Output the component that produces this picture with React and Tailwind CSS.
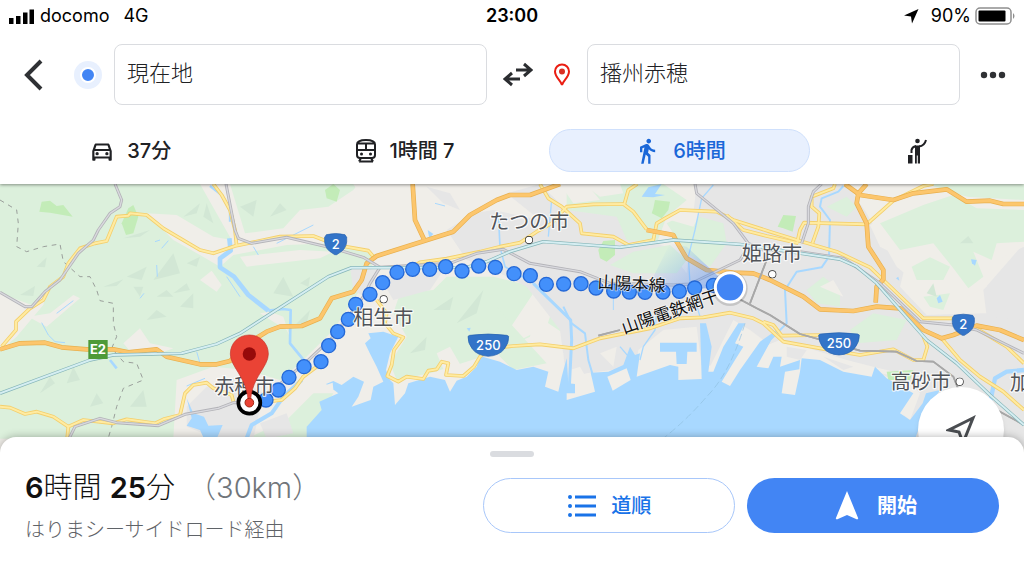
import { useState } from "react";
import { MdDirectionsWalk, MdNavigation, MdOutlineDirectionsCar } from "react-icons/md";

function TrainIcon() {
  return (
    <svg width="22" height="26" viewBox="0 0 22 26" fill="none" stroke="currentColor" strokeWidth="2" aria-hidden="true">
      <path d="M2 6.500C2 3 6 2 11 2s9 1 9 4.500V17a3 3 0 0 1-3 3H5a3 3 0 0 1-3-3ZM2 12h18M11 5v7M3 5.500h16" />
      <path d="M6.500 16h.01M15.500 16h.01" strokeWidth="3" strokeLinecap="round" />
      <path d="M4 23.500h14M6 20l-2 3.500M16 20l2 3.500" />
    </svg>
  );
}

function HailIcon() {
  return (
    <svg width="22" height="28" viewBox="0 0 22 28" fill="currentColor" aria-hidden="true">
      <circle cx="11.500" cy="4" r="2.300" />
      <path d="M9 8.500h5v18h-2.200v-8h-1v8H9z" />
      <path d="M10 9Q6 10 5.500 13v3M13 9.500Q18.500 9 20 3" fill="none" stroke="currentColor" strokeWidth="2" />
      <path d="M2 18h4.500v8.500H2z" />
    </svg>
  );
}

const MODES = [
  { id: "car", label: "37分", name: "車", icon: <MdOutlineDirectionsCar size={26} /> },
  { id: "transit", label: "1時間 7", name: "電車", icon: <TrainIcon /> },
  { id: "walk", label: "6時間", name: "徒歩", icon: <MdDirectionsWalk size={28} /> },
  { id: "hail", label: "", name: "タクシー", icon: <HailIcon /> },
];

// Map geometry is in map units, three per CSS pixel on a 1024px wide screen
const FOREST = [
  "0,12 1060,12 1100,80 1225,180 1120,240 1075,430 1000,470 900,560 860,640 1000,640 965,700 920,776 0,776",
  "1200,340 1300,330 1340,290 1480,290 1560,310 1640,340 1710,420 1690,460 1600,400 1590,470 1480,520 1290,580 1190,600 1170,550 1220,470 1180,400",
  "1700,25 1760,20 1800,50 1870,40 1860,12 1990,12 2060,60 2000,110 1970,190 1880,180 1850,110 1700,90",
  "2000,130 2060,100 2170,130 2180,190 2130,260 2060,220",
  "1830,255 1900,215 2010,195 2060,240 2030,280 1900,280",
  "2420,330 2470,290 2520,330 2520,380 2450,370",
  "2550,450 2620,400 2720,420 2690,480 2570,490",
  "1440,400 1490,380 1540,440 1640,550 1540,570 1500,530",
  "2480,80 2540,50 2570,80 2540,110",
  "2780,12 3072,12 3072,60 2900,50",
];

const HILLSIDE = [
  "2640,130 2770,75 2860,45 2930,85 3072,90 3072,185 2990,190 2975,240 2920,215 2950,290 2905,325 2860,265 2800,190 2700,210",
  "2735,260 2790,232 2850,260 2830,300 2750,300",
  "2770,350 2850,340 2830,390 2790,380",
];

const BARREN = [
  "440,100 530,105 640,170 695,180 600,12 690,12 735,160 850,145 900,90 985,80 1060,30 1075,12 1240,12 1270,170 1130,225 1000,190 860,195 700,225 660,260 600,225 520,180",
  "0,340 95,375 140,340 130,375 50,470 15,500 0,500",
  "85,410 150,400 220,345 240,355 140,440",
  "370,490 420,445 450,490 520,505 480,520 400,525",
  "600,300 635,272 665,315 650,335",
  "780,400 810,395 850,410 870,470 860,450 820,425",
  "1060,120 1120,135 1110,180 1070,170",
  "720,230 900,210 1000,215 960,235 740,260",
  "530,600 640,560 740,570 840,600 900,550 1000,450 1080,330 1130,300 1240,310 1110,430 1150,460 1120,550 1060,590 940,640 860,720 740,776 520,776",
  "1240,12 1536,12 1536,200 1300,240 1270,170",
  "1310,520 1350,500 1390,570 1340,590",
  "1600,340 1660,380 1640,440 1560,480 1540,540 1500,490",
];

const URBAN = [
  "560,680 620,620 710,590 790,640 760,776 650,776 560,740",
  "780,730 860,700 880,760 800,776",
  "1280,20 1350,40 1380,90 1330,70",
  "1340,150 1420,100 1480,90 1620,120 1700,90 1860,90 1900,170 2000,200 2060,280 2090,12 2540,12 2600,100 2690,260 2860,400 3072,400 3072,800 2720,800 2700,590 2440,510 2280,500 2200,560 1990,550 1760,580 1700,600 1680,450 1580,320 1480,270 1400,240",
  "1520,40 1620,12 1700,90 1620,120",
  "1050,260 1130,270 1110,360 1060,330",
  "1140,290 1330,270 1290,330 1180,360",
  "2950,330 3072,190 3072,420 2960,410",
];

const HILLS = [
  "370,175 450,150 420,170", "380,290 440,260 425,300", "310,320 370,298 350,318", "460,300 520,220 540,280",
  "110,260 140,232 135,262", "60,345 105,318 100,348", "200,610 220,560 240,600", "120,640 150,590 165,610",
  "520,340 560,310 570,330", "540,380 580,340 580,385", "440,420 470,390 500,410", "550,110 600,70 590,100",
  "620,70 640,130 610,110", "390,680 430,630 440,680", "270,680 290,640 310,670", "810,110 840,70 860,90",
  "820,340 850,290 880,350", "880,440 930,390 920,430", "1300,390 1360,350 1350,390", "1370,430 1450,330 1430,400",
  "1230,520 1280,470 1275,510", "720,80 770,60 760,110", "470,350 500,330 520,350", "400,320 430,320 420,350",
  "2880,190 2905,168 2920,190", "2780,340 2800,310 2810,350", "560,250 600,230 590,260", "900,310 930,290 925,320",
];

const PARKS = [
  "118,95 125,65 150,62 170,78 190,75 218,110 150,98",
  "365,130 385,85 400,75 415,110 400,160 378,165",
  "975,30 1000,12 1020,30 1010,65 980,55",
  "1795,210 1810,183 1845,180 1845,225 1820,245 1800,235",
  "1960,85 1965,60 2010,65 2005,90 1985,115 1955,100",
  "2333,140 2350,105 2388,108 2378,155 2350,145",
  "2660,575 2740,570 2730,600 2665,600",
];

const RIVERS = [
  { w: 7, d: "M630 18 665 45 690 90 690 125" },
  { w: 14, d: "M688 175 692 212 660 235 660 262 702 290 745 345 805 392" },
  { w: 8, d: "M805 392 850 387 872 390 870 490 915 545" },
  { w: 12, d: "M738 780 755 735 815 700 850 650 905 600" },
  { w: 5, d: "M1495 100 1500 200 1515 260 1600 310" },
  { w: 9, d: "M1600 310 1640 350 1712 420 1715 480 1708 620" },
  { w: 6, d: "M1690 380 1715 430 1755 460 1765 540 1780 590" },
  { w: 4, d: "M1625 20 1655 60 1645 170" },
  { w: 4, d: "M2140 15 2105 55 2085 150 2065 230 2070 310 2100 410" },
  { w: 4, d: "M1970 400 1965 450 1930 500 1920 540M1860 500 1890 535" },
  { w: 6, d: "M2530 18 2515 35 2465 55 2460 80 2490 120 2487 230 2465 262 2390 275 2355 330 2360 430 2310 480 2280 530" },
  { w: 13, d: "M3072 570 3020 575 2985 595 2972 660" },
  { w: 3, d: "M125 428 145 465 165 485 195 488M170 400 220 362M465 185 480 180M485 205 505 182M470 255 472 290M420 355 432 340M680 290 720 350" },
  { w: 3, d: "M830 190 940 135M1305 70 1335 78M760 200 775 225M590 515 600 550M560 618 615 595M1840 340 1840 390" },
  { w: 8, d: "M330 540 350 565" },
];

const LAKES = [
  "560,655 580,700 612,710 625,737 668,735 650,776 612,776 600,750 560,737 575,715",
  "1925,50 1945,22 1985,12 1965,42 1995,45 1960,52",
  "1283,150 1300,162 1288,175",
  "2810,355 2820,345 2828,365 2815,370",
  "2913,238 2930,240 2925,257 2916,250",
  "2688,295 2695,290 2698,302",
  "1400,445 1412,443 1408,455",
];

const SEA =
  "M920 790 920 740 965 690 958 665 1015 640 978 612 1000 603 1025 615 1060 590 1092 605 1075 650 1055 680 1112 660 1120 620 1150 605 1130 560 1112 525 1095 490 1112 475 1105 460 1150 455 1195 470 1170 520 1158 570 1170 600 1180 610 1185 675 1215 640 1225 610 1290 590 1335 600 1350 635 1370 602 1400 590 1430 560 1440 528 1500 545 1550 570 1600 560 1645 575 1635 620 1675 635 1685 590 1700 535 1705 610 1725 612 1725 640 1700 640 1700 660 1785 635 1772 578 1825 575 1870 555 1890 500 1905 525 1920 520 1910 590 2010 555 2035 560 2035 600 2105 597 2100 430 2118 430 2135 500 2125 575 2140 575 2170 500 2215 430 2235 430 2205 490 2230 500 2205 540 2165 605 2190 618 2220 570 2280 485 2330 450 2270 560 2305 565 2320 530 2345 530 2340 560 2400 540 2398 568 2355 575 2345 640 2385 645 2400 575 2405 535 2460 540 2530 575 2615 590 2625 560 2660 595 2740 640 2700 700 2730 720 2768 670 2778 640 2820 630 2770 710 2740 790Z";

const ISLETS = ["1822,590 1880,565 1892,600 1838,632", "980,614 998,608 1000,628 986,636"];

const ROADS = {
  yellow: [
    "M5 500 48 450 48 425 90 385 130 360 150 320 190 290 205 250 240 205 285 190 320 183 350 110 385 107 390 100 440 105 490 145 600 210 640 220 705 198 840 170 940 168 1010 195 1105 212 1122 232",
    "M640 12 665 45 690 90 705 150 710 198",
    "M0 680 30 683 75 702 110 695 160 710 205 740 250 720 340 730 380 718 465 730 490 718 540 705 555 640 580 615 620 608 640 625 695 645 700 665",
    "M205 740 200 790",
    "M1130 360 1160 400 1155 430 1180 460 1210 472 1182 510 1175 555 1162 588 1195 605 1220 590 1270 597 1285 572 1310 568 1325 545 1345 550 1338 585 1390 588 1422 560 1440 530 1470 505 1540 498 1620 493 1720 505 1800 475 1950 445 2040 415 2110 412 2190 398 2260 415 2290 430 2350 485 2460 505 2580 525 2680 508 2740 540 2770 540 2782 500 2770 470",
    "M2290 425 2320 435 2345 467 2460 465",
    "M800 665 845 660 885 625 910 590 950 560",
    "M1230 265 1260 247 1340 236 1440 215 1500 200 1560 188 1610 155 1655 130 1700 80 1780 73 1870 72 1900 95 1940 148",
    "M1620 12 1645 55 1685 80 1740 130 1745 160 1840 170 1885 195 1960 180 1970 130 1995 115 2040 90 2150 95 2200 120 2310 155 2400 183 2510 215 2610 262 2650 300 2770 415 2860 415",
    "M2180 105 2230 150 2300 168 2395 190",
    "M1912 12 1885 30 1873 72",
    "M2505 12 2500 25 2435 50 2435 80 2458 100 2455 140 2437 190",
    "M2392 185 2400 150 2412 128 2600 133 2680 62 2770 18 2800 12",
    "M2825 475 2880 540 2940 590 3010 635 3072 690",
    "M2920 440 3020 500 3072 550",
  ],
  orange: [
    "M0 508 60 490 135 488 185 502 260 508 340 508 385 517 470 508 500 530 600 553 650 553 690 543 760 480 800 455 840 440 905 438 960 415 995 355 1060 335 1085 300 1100 250 1130 228 1360 155 1410 105 1490 60 1530 45 1590 45 1680 12",
    "M1238 12 1245 120 1272 178",
    "M1940 150 2020 165 2030 185 2060 235 2120 270 2200 278 2260 280 2310 300 2410 350 2460 388 2560 393 2630 380 2700 385 2770 450 2825 475 2860 465 2930 437 3000 450 3072 480",
    "M2535 12 2580 45 2680 60 2740 40 2840 28 2900 65 2970 62 3010 72 3072 72",
    "M2600 12 2575 40 2570 70 2600 130 2605 200 2650 270 2650 298 2630 320 2627 368",
  ],
  rail: [
    "M345 12 365 60 360 80 330 100 295 150 280 180 235 220 180 300 135 335 95 380 75 380 0 337",
    "M678 12 705 150 715 175 755 190 860 172 1000 205 1090 232 1140 262 1110 310 1090 350 1000 470 920 545 830 620 750 668 700 668 655 685 555 703 475 737 350 728 300 715 225 740 200 790",
    "M1140 262 1350 250 1430 220 1510 208 1590 250 1740 275 1830 310 2020 315 2070 312 2220 240 2245 200",
    "M2085 12 2090 40 2200 130 2245 190 2290 210 2400 215 2530 235 2640 310 2760 425 2860 435 2930 450 3072 520",
    "M2465 12 2440 35 2425 80 2425 130 2405 190",
  ],
  privateRail: [
    "M2300 240 2250 370",
    "M1795 467 1860 450",
    "M2195 345 2270 385 2310 405 2400 462 2580 512 2690 515 2750 543 2800 545 2860 590 2880 640 2930 690 3000 695 3072 735",
  ],
  shinkansen: [
    "M0 640 270 540 340 525 545 520 650 492 720 460 985 290 1055 263 1200 263 1400 262 1460 245 1530 215 1630 185 1860 202 2020 180 2220 193 2350 212 2520 238 2570 260 2630 310 2780 480 2870 550 2970 645 3072 735",
  ],
};

const PREFECTURE_BORDER =
  "M0 60 50 90 55 130 50 200 80 215 130 200 180 192 190 245 240 290 270 290 290 330 300 362 340 370 340 430 350 470 335 505 370 545 410 550 430 600 370 625 350 680 335 740 320 790";

const ROUTE = [
  [798, 660], [835, 630], [867, 592], [912, 560], [963, 545], [986, 497], [1013, 455], [1045, 418],
  [1067, 373], [1110, 343], [1148, 308], [1191, 277], [1238, 268], [1289, 268], [1337, 260], [1386, 273],
  [1436, 258], [1486, 262], [1542, 281], [1591, 287], [1639, 313], [1691, 312], [1743, 311], [1788, 324],
  [1841, 333], [1888, 336], [1935, 337], [1989, 336], [2038, 334], [2084, 324], [2140, 316],
];

const CITIES = [
  { name: "たつの市", x: 1588, y: 147, dot: [1587, 180] },
  { name: "姫路市", x: 2316, y: 244, dot: [2317, 283] },
  { name: "相生市", x: 1150, y: 436, dot: [1151, 358] },
  { name: "赤穂市", x: 733, y: 643 },
  { name: "高砂市", x: 2762, y: 627, dot: [2879, 605] },
  { name: "加", x: 3060, y: 630 },
];

const SHIELDS = [
  { n: "2", x: 1007, y: 192 },
  { n: "2", x: 2890, y: 434 },
  { n: "250", x: 1465, y: 495 },
  { n: "250", x: 2517, y: 491 },
];

function Polygons({ shapes, fill }) {
  return (
    <g fill={fill}>
      {shapes.map((points) => (
        <polygon key={points} points={points} />
      ))}
    </g>
  );
}

// A wide edge stroke with a narrower core on top
function Lines({ paths, edge, core, outer, inner }) {
  return (
    <g fill="none" strokeLinejoin="round">
      {paths.map((d) => <path key={d} d={d} stroke={edge} strokeWidth={outer} />)}
      {paths.map((d) => <path key={d} d={d} stroke={core} strokeWidth={inner} />)}
    </g>
  );
}

function Shield({ n, x, y }) {
  const wide = n.length > 1;
  return (
    <g transform={`translate(${x} ${y})`}>
      <path
        d={
          wide
            ? "M-56-29Q0-37 56-29L61-26Q62 -6 48 12Q32 32 0 34Q-32 32-48 12Q-62-6-61-26Z"
            : "M-28-28Q0-35 28-28L33-20Q36 8 18 22L3 32H-3L-18 22Q-36 8-33-20Z"
        }
        fill="#3374c8"
        stroke="#2560ad"
        strokeWidth="2"
      />
      <text y="14" textAnchor="middle" fill="#fff" fontSize="39" fontWeight="500">
        {n}
      </text>
    </g>
  );
}

function RouteMap() {
  return (
    <svg
      viewBox="0 12 3072 888"
      preserveAspectRatio="xMidYMin slice"
      className="absolute inset-0 h-full w-full"
      role="img"
      aria-label="経路の地図"
    >
      <defs>
        <linearGradient id="beam" x1="1" y1="1" x2="0" y2="0.3">
          <stop offset="0" stopColor="#4285f4" stopOpacity="0.55" />
          <stop offset="1" stopColor="#4285f4" stopOpacity="0" />
        </linearGradient>
      </defs>

      <rect y="12" width="3072" height="888" fill="#f0eee9" />
      <Polygons shapes={FOREST.slice(0, 2)} fill="#dcf0dc" />
      <Polygons shapes={BARREN} fill="#f0eee9" />
      <Polygons shapes={URBAN} fill="#e6e6e6" />
      <Polygons shapes={FOREST.slice(2)} fill="#dcf0dc" />

      {/* Foothills, port and reclaimed land */}
      <g fill="#f0eee9">
        <path d="M2610 135 2780 60 2840 38 3072 85V200L2970 250 2960 320 2900 350 2940 400 2780 405 2700 320 2720 240 2640 200Z" />
        <path d="M1640 575 1670 500 1690 520 1690 640 1630 620ZM1710 570 1740 560 1785 640 1700 660ZM1905 590 1915 510 1990 450 2090 440 2110 600 2030 600 2000 550ZM2120 580 2200 420 2250 450 2290 480 2200 620ZM2280 560 2290 500 2340 480 2420 500 2440 510 2540 540 2620 560 2700 580 2760 640 2730 720 2690 690 2400 660Z" />
        <path d="M2460 320 2530 350 2500 300ZM1680 12 1760 12 1800 60 1720 70ZM2040 90 2100 100 2080 140 2010 120ZM1800 520 1850 500 1840 560Z" />
      </g>
      <path d="M2360 500 2420 510 2400 540 2360 530ZM2470 530 2560 560 2530 570ZM2640 580 2700 590 2680 600Z" fill="#e6e6e6" />
      <Polygons shapes={HILLSIDE} fill="#dcf0dc" />
      <Polygons shapes={HILLS} fill="#d2e7d5" />
      <Polygons shapes={PARKS} fill="#c3ecb8" />

      <path d={SEA} fill="#a8d8ff" />
      <Polygons shapes={ISLETS} fill="#f0eee9" />
      <path d="M1980 488H2090V515H2062L2060 552H2030L2028 515H1980ZM1840 635l8 8 6-8 4 4-8 12z" fill="#a8d8ff" />
      <Polygons shapes={LAKES} fill="#a8d8ff" />
      <g fill="none" stroke="#a8d8ff" strokeLinejoin="round">
        {RIVERS.map(({ d, w }) => <path key={d} d={d} strokeWidth={w} />)}
      </g>
      <path d="M2235 430Q2190 580 2120 650Q2060 720 1990 775" fill="none" stroke="#8fbfe0" strokeWidth="2" strokeDasharray="22 10" />

      <path d={PREFECTURE_BORDER} fill="none" stroke="#9a9f9b" strokeWidth="3" strokeDasharray="14 14" />
      <Lines paths={ROADS.yellow} edge="#f3cf6d" core="#ffeba1" outer={11} inner={6} />
      <Lines paths={ROADS.orange} edge="#e9b04e" core="#fcc66d" outer={14} inner={10} />
      <Lines paths={ROADS.rail} edge="#b3b3b8" core="#d9d9de" outer={9} inner={4} />
      <Lines paths={ROADS.privateRail} edge="#a8a8a8" core="#a8a8a8" outer={5} inner={5} />
      <Lines paths={ROADS.shinkansen} edge="#86b5b8" core="#d5eef2" outer={10} inner={6} />

      <polygon points="2190,322 2000,330 1960,290 2010,190 2060,200" fill="url(#beam)" />

      <g fill="#4390fb" stroke="#2468d6" strokeWidth="4">
        {ROUTE.map(([x, y]) => <circle key={x} cx={x} cy={y} r="21" />)}
      </g>

      {SHIELDS.map((s) => <Shield key={s.x} {...s} />)}
      <rect x="265" y="480" width="58" height="57" fill="#4e9a38" />
      <text x="294" y="523" textAnchor="middle" fill="#fff" fontSize="39" fontWeight="700">E2</text>

      <g fontSize="60" textAnchor="middle" fill="#505358" stroke="#fff" strokeOpacity="0.8" strokeWidth="7" strokeLinejoin="round" paintOrder="stroke">
        {CITIES.map((c) => (
          <g key={c.name}>
            <text x={c.x} y={c.y}>{c.name}</text>
            {c.dot && <circle cx={c.dot[0]} cy={c.dot[1]} r="10" fill="#fff" stroke="#222" strokeOpacity="1" strokeWidth="4" />}
          </g>
        ))}
      </g>
      <g fontSize="51" fill="#111" stroke="#fff" strokeOpacity="0.6" strokeWidth="5" paintOrder="stroke">
        <text transform="translate(1792 324) rotate(3)">山陽本線</text>
        <text transform="translate(1872 462) rotate(-19)">山陽電鉄網干線</text>
      </g>

      <circle cx="2190" cy="325" r="53" fill="#000" opacity="0.14" />
      <circle cx="2190" cy="322" r="44" fill="#4285f4" stroke="#fff" strokeWidth="9" />

      <circle cx="748" cy="668" r="33" fill="#fff" stroke="#000" strokeWidth="11" />
      <path
        d="M748 465C715 465 691 490 691 522C691 560 738 590 744 656H752C758 590 805 560 805 522C805 490 781 465 748 465Z"
        fill="#ea4335"
        stroke="#c5372c"
        strokeWidth="2"
      />
      <circle cx="748" cy="522" r="20" fill="#960a0a" />
      <circle cx="748" cy="668" r="13" fill="#ea4335" stroke="#a52714" strokeWidth="3" />
    </svg>
  );
}

function StatusBar() {
  return (
    <div className="flex h-8 items-center px-2 text-lg text-black">
      <div className="flex flex-1 items-center gap-1.5">
        <svg width="26" height="16" viewBox="0 0 26 16" aria-hidden="true">
          <path d="M1 10h4.500v6H1zM8 8h4.500v8H8zM15 4.500h4.500v11.500H15zM21.500 1.500H26V16h-4.500z" />
        </svg>
        <span>docomo</span>
        <span className="ml-2">4G</span>
      </div>
      <time className="font-semibold">23:00</time>
      <div className="flex flex-1 items-center justify-end gap-1">
        <svg width="16" height="16" viewBox="0 0 16 16" className="mr-2" aria-hidden="true">
          <path d="M15.500 1 9 15.500 8 8.500 1 7.500Z" />
        </svg>
        <span>90%</span>
        <svg width="41" height="18" viewBox="0 0 41 18" aria-hidden="true">
          <rect x="1" y="1" width="35" height="16" rx="4" fill="none" stroke="#8e8e8e" strokeWidth="1.500" />
          <rect x="3.500" y="3.500" width="27" height="11" rx="1" />
          <path d="M38 6q3 3 0 6z" fill="#8e8e8e" />
        </svg>
      </div>
    </div>
  );
}

const inputClass =
  "h-[61px] w-full min-w-0 flex-1 rounded-lg border border-[#dadce0] bg-white px-3 pb-2 text-[22px] font-light text-[#202124] focus:outline-none";

function SearchRow() {
  const [from, setFrom] = useState("現在地");
  const [to, setTo] = useState("播州赤穂");

  const swap = () => {
    setFrom(to);
    setTo(from);
  };

  return (
    <div className="mt-3 flex items-center pr-[18px] pl-6">
      <button type="button" aria-label="戻る">
        <svg width="20" height="32" viewBox="0 0 20 32" fill="none" stroke="#2f3134" strokeWidth="4">
          <path d="M17 2 3 16l14 14" />
        </svg>
      </button>
      <span className="mr-3 ml-[30px] flex size-7 shrink-0 items-center justify-center rounded-full bg-[#e8f0fe]">
        <span className="box-content size-3 rounded-full border-2 border-white bg-[#4285f4]" />
      </span>
      <input aria-label="出発地" className={inputClass} value={from} onChange={(e) => setFrom(e.target.value)} />
      <button type="button" aria-label="出発地と目的地を入れ替え" className="mx-4" onClick={swap}>
        <svg width="30" height="26" viewBox="0 0 30 26" fill="none" stroke="#2b2d30" strokeWidth="3">
          <path d="M13 8h15M21 2l7 6-7 6M17 17H2M9 11l-7 6 7 6" />
        </svg>
      </button>
      <svg width="18" height="24" viewBox="0 0 18 24" fill="none" className="mr-4 ml-1 shrink-0" aria-hidden="true">
        <path d="M9 22C8 18 2 14 2 8.500a7 7 0 0 1 14 0C16 14 10 18 9 22Z" stroke="#ea1d12" strokeWidth="2" />
        <circle cx="9" cy="8.500" r="3" fill="#d93025" />
      </svg>
      <input aria-label="目的地" className={inputClass} value={to} onChange={(e) => setTo(e.target.value)} />
      <button type="button" aria-label="その他" className="ml-5">
        <svg width="26" height="8" viewBox="0 0 26 8" fill="#2f3134">
          <circle cx="4" cy="4" r="3.200" />
          <circle cx="13" cy="4" r="3.200" />
          <circle cx="22" cy="4" r="3.200" />
        </svg>
      </button>
    </div>
  );
}

function ModeTabs() {
  const [mode, setMode] = useState("walk");

  return (
    <div className="mt-6 grid grid-cols-[7fr_7fr_7fr_5fr] gap-3.5 pr-3.5">
      {MODES.map(({ id, label, name, icon }) => (
        <button
          key={id}
          type="button"
          aria-label={label ? `${name} ${label}` : name}
          aria-pressed={mode === id}
          onClick={() => setMode(id)}
          className={`flex h-[43px] items-center justify-center gap-3 rounded-full border text-xl font-medium ${
            mode === id ? "border-[#cfe0fc] bg-[#e8f0fe] text-[#1a67d8]" : "border-transparent text-[#202124]"
          }`}
        >
          {icon}
          {label}
        </button>
      ))}
    </div>
  );
}

function BottomSheet() {
  return (
    <section className="relative z-10 -mt-10 rounded-t-2xl bg-white px-[25px] pt-3.5 pb-8 shadow-[0_0_8px_rgba(0,0,0,0.3)]">
      <div className="mx-auto h-1.5 w-11 rounded-full bg-[#dadce0]" />
      <div className="mt-[21px] grid grid-cols-[8fr_9fr]">
        <div className="-mt-2">
          <p className="flex items-baseline text-[29px] leading-9 font-light text-[#111]">
            <span><b className="font-semibold">6</b>時間 <b className="font-semibold">25</b>分</span>
            <span className="ml-3 text-[#70757a]">（30km）</span>
          </p>
          <p className="mt-2.5 text-xl font-light text-[#5f6368]">はりまシーサイドロード経由</p>
        </div>
        <div className="grid h-[55px] grid-cols-2 gap-3">
          <button
            type="button"
            className="flex items-center justify-center gap-3.5 rounded-full border border-[#a8c7fa] text-xl font-medium text-[#1a73e8]"
          >
            <svg width="30" height="24" viewBox="0 0 30 24" fill="none" stroke="currentColor" aria-hidden="true">
              <path d="M8 3h21M8 12h21M8 21h21" strokeWidth="3" />
              <path d="M3 3h.01M3 12h.01M3 21h.01" strokeWidth="4" strokeLinecap="round" />
            </svg>
            道順
          </button>
          <button
            type="button"
            className="flex items-center justify-center gap-3 rounded-full bg-[#4285f4] text-xl font-bold text-white"
          >
            <MdNavigation size={36} />
            開始
          </button>
        </div>
      </div>
    </section>
  );
}

export default function App() {
  return (
    <div className="flex h-screen flex-col overflow-hidden bg-white font-['Inter','Noto_Sans_CJK_JP',sans-serif]">
      <header className="relative z-10 bg-white pb-3 shadow-[0_1px_3px_rgba(0,0,0,0.4)]">
        <StatusBar />
        <SearchRow />
        <ModeTabs />
      </header>
      <main className="relative min-h-0 flex-1">
        <RouteMap />
        <button
          type="button"
          aria-label="現在地に移動"
          className="absolute right-5 bottom-1 flex size-[86px] items-center justify-center rounded-full bg-white shadow-md"
        >
          <svg width="30" height="30" viewBox="0 0 30 30" fill="none" stroke="#4a4d51" strokeWidth="3">
            <path d="M27 3 3 15l10 2 4 11Z" />
          </svg>
        </button>
      </main>
      <BottomSheet />
    </div>
  );
}
